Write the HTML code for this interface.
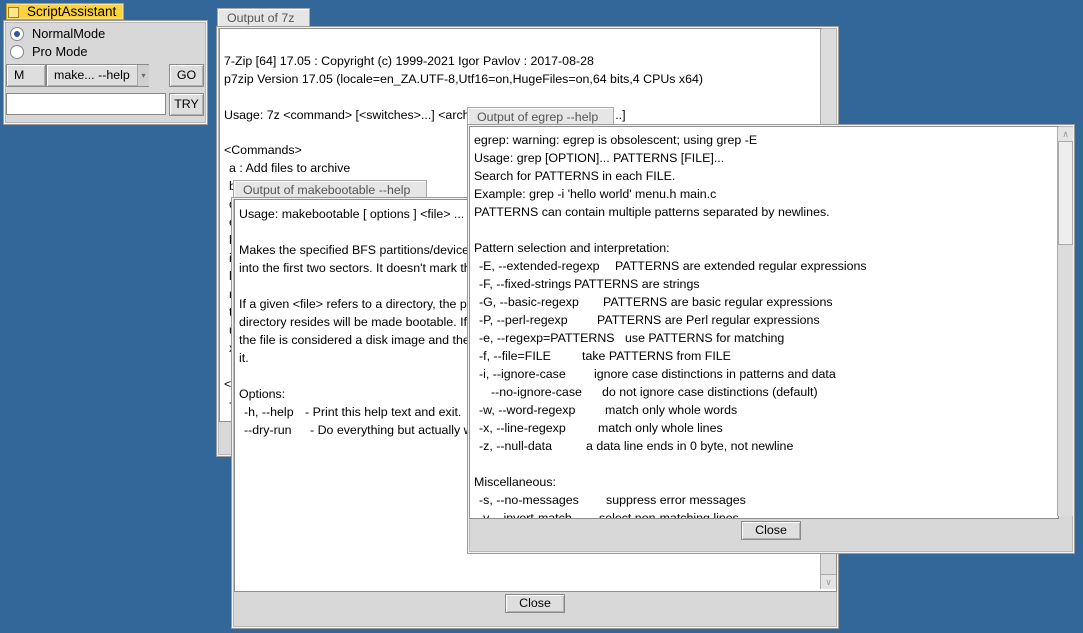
<!DOCTYPE html><html><head><style>
body{margin:0;width:1083px;height:633px;background:#336699;position:relative;overflow:hidden;font:12px "Liberation Sans",sans-serif;color:#000}
.a{position:absolute}
.win{position:absolute;background:#d8d8d8;border:1px solid #9a9a9a;box-shadow:inset 0 0 0 1px #f4f4f4,inset 0 0 0 2px #b8b8b8}
.tab{position:absolute;background:#e6e6e6;border:1px solid #a8a8a8;border-bottom:none;color:#555;font-size:12.4px;padding-left:9px;line-height:18px;box-shadow:inset 1px 1px 0 #fff}
.txt{position:absolute;background:#fff;border:1px solid #8f8f8f;overflow:hidden;font-size:12.4px}
.txt div{position:absolute;white-space:pre;line-height:16px}
.sb{position:absolute;background:#dcdcdc;border-left:1px solid #aaa}
.btn{position:absolute;background:#dedede;border:1px solid #8a8a8a;box-shadow:inset 1px 1px 0 #fff,inset -1px -1px 0 #b0b0b0;text-align:center;line-height:16px;font-size:12.4px}
.arr{position:absolute;left:0;width:15px;height:14px;color:#999;font-size:9px;text-align:center;line-height:14px;background:#e4e4e4;border-bottom:1px solid #aaa}
</style></head><body>

<!-- ScriptAssistant -->
<div class="a" style="left:6px;top:3px;width:118px;height:17px;background:#fcd23a;border:1px solid #c8a020;box-sizing:border-box;box-shadow:inset 0 0 0 1px #ffe27a"></div>
<div class="a" style="left:8px;top:7px;width:9px;height:9px;border:1px solid #a08020;background:#ffe68a"></div>
<div class="a" style="left:27px;top:3px;font-size:13.5px;line-height:17px">ScriptAssistant</div>
<div class="win" style="left:3px;top:20px;width:203px;height:103px"></div>
<div class="a" style="left:10px;top:27px;width:12px;height:12px;border-radius:50%;border:1px solid #888;background:#fff"></div>
<div class="a" style="left:14px;top:31px;width:6px;height:6px;border-radius:50%;background:#335599"></div>
<div class="a" style="left:10px;top:45px;width:12px;height:12px;border-radius:50%;border:1px solid #888;background:#fff"></div>
<div class="a" style="left:32px;top:26px;font-size:12.8px;line-height:16px">NormalMode</div>
<div class="a" style="left:32px;top:44px;font-size:12.8px;line-height:16px">Pro Mode</div>
<div class="btn" style="left:6px;top:64px;height:23px;line-height:21px;text-align:left;padding-left:7px;box-sizing:border-box;width:40px">M</div>
<div class="btn" style="left:46px;top:64px;width:103px;height:23px;line-height:21px;box-sizing:border-box;text-align:left;padding-left:7px">make... --help</div>
<div class="a" style="left:137px;top:65px;width:11px;height:21px;background:#cfcfcf;border-left:1px solid #aaa;font-size:8px;color:#666;text-align:center;line-height:21px">▾</div>
<div class="btn" style="left:169px;top:64px;width:35px;height:23px;line-height:21px;box-sizing:border-box">GO</div>
<div class="a" style="left:6px;top:93px;width:160px;height:22px;background:#fff;border:1px solid #888;box-sizing:border-box"></div>
<div class="btn" style="left:169px;top:93px;width:35px;height:23px;line-height:21px;box-sizing:border-box">TRY</div>

<!-- 7z -->
<div class="tab" style="left:217px;top:8px;width:82px;height:18px">Output of 7z</div>
<div class="win" style="left:216px;top:26px;width:621px;height:429px"></div>
<div class="txt" style="left:219px;top:28px;width:601px;height:392px">
<div style="left:4px;top:24px">7-Zip [64] 17.05 : Copyright (c) 1999-2021 Igor Pavlov : 2017-08-28</div>
<div style="left:4px;top:42px">p7zip Version 17.05 (locale=en_ZA.UTF-8,Utf16=on,HugeFiles=on,64 bits,4 CPUs x64)</div>
<div style="left:4px;top:78px">Usage: 7z &lt;command&gt; [&lt;switches&gt;...] &lt;archive_name&gt; [&lt;file_names&gt;...]</div>
<div style="left:4px;top:113px">&lt;Commands&gt;</div>
<div style="left:9px;top:131px">a : Add files to archive</div>
<div style="left:9px;top:149px">b</div><div style="left:9px;top:167px">d</div><div style="left:9px;top:185px">e</div>
<div style="left:9px;top:203px">h</div><div style="left:9px;top:221px">i</div><div style="left:9px;top:239px">l</div>
<div style="left:9px;top:257px">r</div><div style="left:9px;top:275px">t</div><div style="left:9px;top:293px">u</div>
<div style="left:9px;top:311px">x</div><div style="left:4px;top:347px">&lt;S</div><div style="left:9px;top:365px">-</div>
</div>
<div class="sb" style="left:820px;top:29px;width:15px;height:390px"></div>

<!-- makebootable -->
<div class="tab" style="left:233px;top:180px;width:183px;height:18px">Output of makebootable --help</div>
<div class="win" style="left:231px;top:197px;width:606px;height:430px"></div>
<div class="txt" style="left:234px;top:199px;width:601px;height:391px">
<div style="left:4px;top:6px">Usage: makebootable [ options ] &lt;file&gt; ...</div>
<div style="left:4px;top:42px">Makes the specified BFS partitions/devices bootable by writing boot code</div>
<div style="left:4px;top:60px">into the first two sectors. It doesn't mark the partition(s) active.</div>
<div style="left:4px;top:96px">If a given &lt;file&gt; refers to a directory, the partition/device on which the</div>
<div style="left:4px;top:114px">directory resides will be made bootable. If it refers to a regular file,</div>
<div style="left:4px;top:132px">the file is considered a disk image and the boot code will be written to</div>
<div style="left:4px;top:150px">it.</div>
<div style="left:4px;top:186px">Options:</div>
<div style="left:9px;top:204px">-h, --help</div><div style="left:70px;top:204px">- Print this help text and exit.</div>
<div style="left:9px;top:222px">--dry-run</div><div style="left:75px;top:222px">- Do everything but actually write the boot code.</div>
</div>
<div class="sb" style="left:820px;top:200px;width:15px;height:389px"><div class="arr" style="top:374px;border-top:1px solid #aaa;border-bottom:none">&#x2228;</div></div>
<div class="btn" style="left:505px;top:594px;width:58px;height:17px">Close</div>

<!-- egrep -->
<div class="tab" style="left:467px;top:107px;width:136px;height:18px">Output of egrep --help</div>
<div class="win" style="left:467px;top:124px;width:606px;height:428px"></div>
<div class="txt" style="left:469px;top:126px;width:588px;height:391px">
<div style="left:4px;top:5px">egrep: warning: egrep is obsolescent; using grep -E</div>
<div style="left:4px;top:23px">Usage: grep [OPTION]... PATTERNS [FILE]...</div>
<div style="left:4px;top:41px">Search for PATTERNS in each FILE.</div>
<div style="left:4px;top:59px">Example: grep -i 'hello world' menu.h main.c</div>
<div style="left:4px;top:77px">PATTERNS can contain multiple patterns separated by newlines.</div>
<div style="left:4px;top:113px">Pattern selection and interpretation:</div>
<div style="left:9px;top:131px">-E, --extended-regexp</div><div style="left:145px;top:131px">PATTERNS are extended regular expressions</div>
<div style="left:9px;top:149px">-F, --fixed-strings</div><div style="left:104px;top:149px">PATTERNS are strings</div>
<div style="left:9px;top:167px">-G, --basic-regexp</div><div style="left:133px;top:167px">PATTERNS are basic regular expressions</div>
<div style="left:9px;top:185px">-P, --perl-regexp</div><div style="left:127px;top:185px">PATTERNS are Perl regular expressions</div>
<div style="left:9px;top:203px">-e, --regexp=PATTERNS</div><div style="left:155px;top:203px">use PATTERNS for matching</div>
<div style="left:9px;top:221px">-f, --file=FILE</div><div style="left:112px;top:221px">take PATTERNS from FILE</div>
<div style="left:9px;top:239px">-i, --ignore-case</div><div style="left:124px;top:239px">ignore case distinctions in patterns and data</div>
<div style="left:21px;top:257px">--no-ignore-case</div><div style="left:132px;top:257px">do not ignore case distinctions (default)</div>
<div style="left:9px;top:275px">-w, --word-regexp</div><div style="left:135px;top:275px">match only whole words</div>
<div style="left:9px;top:293px">-x, --line-regexp</div><div style="left:128px;top:293px">match only whole lines</div>
<div style="left:9px;top:311px">-z, --null-data</div><div style="left:116px;top:311px">a data line ends in 0 byte, not newline</div>
<div style="left:4px;top:347px">Miscellaneous:</div>
<div style="left:9px;top:365px">-s, --no-messages</div><div style="left:136px;top:365px">suppress error messages</div>
<div style="left:9px;top:383px">-v, --invert-match</div><div style="left:129px;top:383px">select non-matching lines</div>
</div>
<div class="sb" style="left:1057px;top:127px;width:15px;height:389px">
<div class="arr" style="top:0">&#x2227;</div>
<div class="a" style="left:0;top:15px;height:103px;background:#eeeeee;border:1px solid #aaa;border-top:none;box-sizing:border-box;width:15px"></div>
</div>
<div class="btn" style="left:741px;top:521px;width:58px;height:17px">Close</div>
</body></html>
